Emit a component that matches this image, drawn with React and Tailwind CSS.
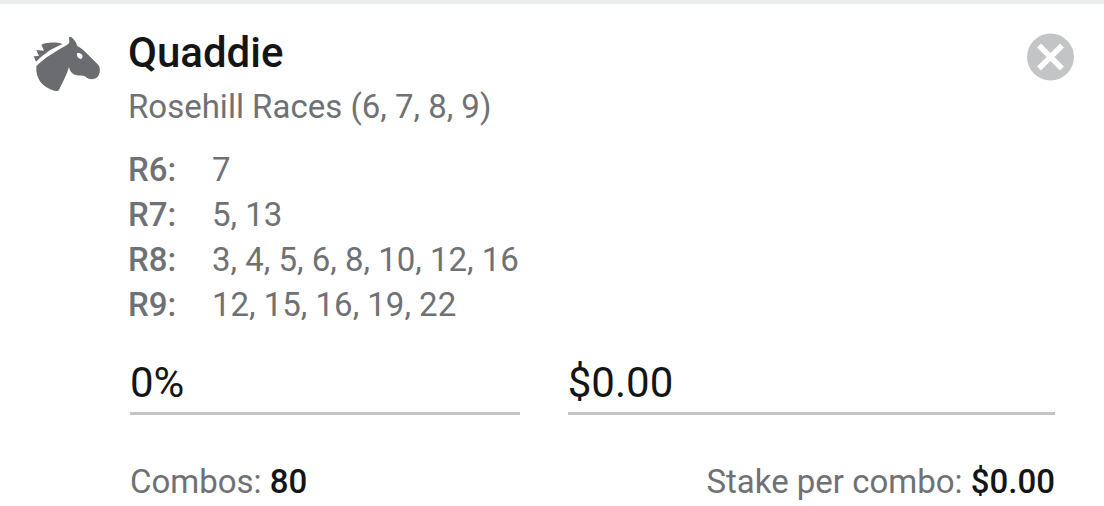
import { useState } from "react";

const legs = [
    { race: "R6", runners: [7] },
    { race: "R7", runners: [5, 13] },
    { race: "R8", runners: [3, 4, 5, 6, 8, 10, 12, 16] },
    { race: "R9", runners: [12, 15, 16, 19, 22] },
];

const HorseIcon = () => (
    <svg viewBox="40 33 204 168" className="w-[68px] h-14 fill-[#6a6c70]" aria-hidden="true">
        <path d="M42 94 L58 93 L50 75 L73 77 L65 59 C80 52 106 50 129 57 C101 68 73 85 49 110 Z" />
        <path
            fillRule="evenodd"
            d="M50 124 C72 99 110 78 138 62 C147 57 149 54 149 47 L148 38 C149 34 153 34 157 38 C165 45 170 51 172 62 C188 70 203 86 236 120 C243 130 241 142 237 151 C231 163 217 165 204 160 C200 157 198 155 194 153 C188 152 181 153 172 151 C157 148 150 138 148 126 C142 147 132 167 118 194 C115 199 111 199 104 197 C70 188 47 163 50 124 Z M172 85 C171 93 175 101 184 102 C189 100 190 94 187 89 C183 85 177 83 172 85 Z"
        />
    </svg>
);

const CloseButton = ({ onClick }) => (
    <button type="button" aria-label="Remove bet" onClick={onClick} className="shrink-0 rounded-full">
        <svg viewBox="0 0 48 48" className="w-12 h-12">
            <circle cx="23.5" cy="24" r="23.5" fill="#c3c4c5" />
            <path d="M12 12.5 L35 35.5 M35 12.5 L12 35.5" stroke="#fff" strokeWidth="5.5" />
        </svg>
    </button>
);

const AmountInput = ({ label, value, onChange }) => (
    <input
        type="text"
        aria-label={label}
        value={value}
        onChange={(e) => onChange(e.target.value)}
        className="w-full min-w-0 pb-[5px] border-b-[3px] border-[#c4c5c5] text-[42px] leading-[48px] text-[#141516] outline-none focus:border-gray-500"
    />
);

const App = () => {
    const [open, setOpen] = useState(true);
    const [percent, setPercent] = useState("0%");
    const [stake, setStake] = useState("$0.00");

    if (!open) return null;

    return (
        <main className="min-h-screen bg-white border-t-4 border-[#ebecec] font-['Roboto',sans-serif] text-[33px] leading-10 text-[#6f7174]">
            <section className="flex items-start pl-[33px] pr-[29px] pt-[25px]">
                <div className="w-[95px] shrink-0 pt-[7px]">
                    <HorseIcon />
                </div>

                <div className="flex-1 min-w-0">
                    <header className="flex items-start justify-between">
                        <div>
                            <h1 className="text-[42px] leading-[48px] font-medium text-[#141516]">Quaddie</h1>
                            <p className="mt-[10px]">Rosehill Races (6, 7, 8, 9)</p>
                        </div>
                        <div className="pt-1">
                            <CloseButton onClick={() => setOpen(false)} />
                        </div>
                    </header>

                    <dl className="mt-5 leading-[45px]">
                        {legs.map((leg) => (
                            <div key={leg.race} className="flex">
                                <dt className="w-[84px] shrink-0 font-medium">{leg.race}:</dt>
                                <dd>{leg.runners.join(", ")}</dd>
                            </div>
                        ))}
                    </dl>

                    <div className="pl-0.5 pr-5">
                        <div className="mt-8 grid grid-cols-[4fr_5fr] gap-12">
                            <AmountInput label="Percentage" value={percent} onChange={setPercent} />
                            <AmountInput label="Stake" value={stake} onChange={setStake} />
                        </div>

                        <footer className="mt-[47px] flex justify-between">
                            <p>
                                Combos: <strong className="font-medium text-[#141516]">80</strong>
                            </p>
                            <p>
                                Stake per combo: <strong className="font-medium text-[#141516]">$0.00</strong>
                            </p>
                        </footer>
                    </div>
                </div>
            </section>
        </main>
    );
};

export default App;
